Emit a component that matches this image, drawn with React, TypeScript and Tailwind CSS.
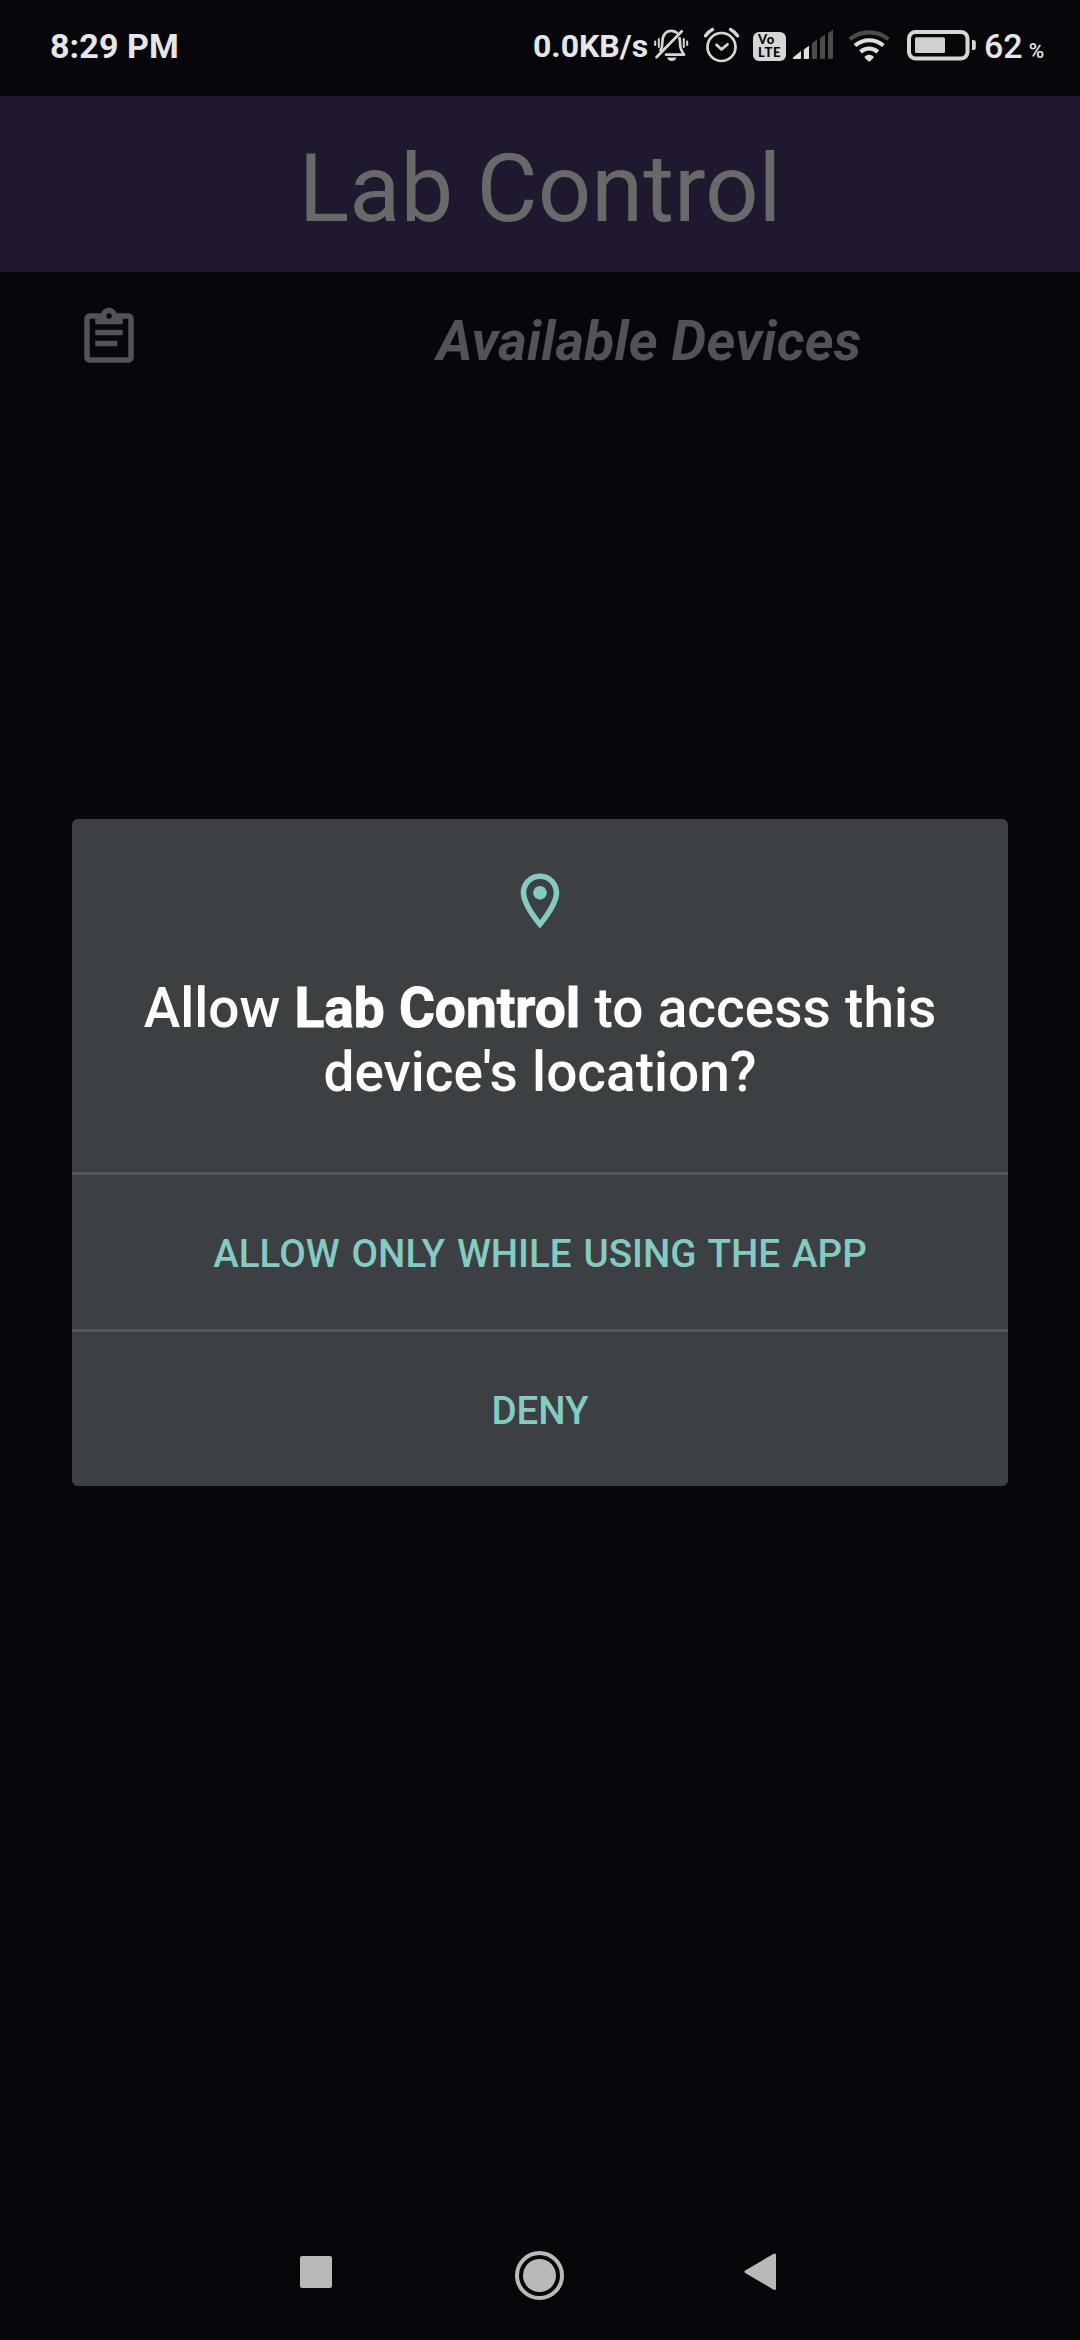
import type { ReactNode } from 'react';

function StatusIcon({ box, className, children }: { box: string; className: string; children: ReactNode }) {
  return (
    <svg viewBox={box} className={`h-10 shrink-0 ${className}`} fill="none" aria-hidden="true">
      {children}
    </svg>
  );
}

function BellOff() {
  return (
    <StatusIcon box="0 0 38 40" className="w-[38px] text-[#d6d6d6]">
      <g stroke="currentColor" strokeWidth="2.7" strokeLinecap="round">
        <path d="M8.500 24.500c1.600-2.500 1.900-5 1.900-8.500 0-7 3.600-11.200 8.800-11.200 2.200 0 4.200.7 5.600 2" />
        <path d="M27.500 12.200c.6 2 .5 4 .6 6.300.1 4 1.300 6.500 4 10.200H14" strokeLinejoin="round" />
        <path d="M4.500 31.300 29.800 5.200" />
      </g>
      <path d="M15 31.500h9.500c-.8 2.500-2.500 3.500-4.700 3.500s-4-1-4.800-3.500z" fill="currentColor" />
      <g stroke="currentColor" strokeWidth="2" strokeLinecap="round">
        <path d="M6.800 13v8M3.200 15.500v3.500M31.800 13v8M35.200 15.500v3.500" />
      </g>
    </StatusIcon>
  );
}

function Alarm() {
  return (
    <StatusIcon box="0 0 38 40" className="w-[38px] text-[#d6d6d6]">
      <circle cx="19.500" cy="21" r="14" stroke="currentColor" strokeWidth="2.700" />
      <path d="m14.500 18.800 5 4.600 6-5" stroke="currentColor" strokeWidth="2.700" strokeLinecap="round" strokeLinejoin="round" />
      <path d="M3.500 9.800c1.800-2.600 4-4.600 7-6.200M35.500 9.800c-1.800-2.600-4-4.600-7-6.200" stroke="currentColor" strokeWidth="3.400" strokeLinecap="round" />
    </StatusIcon>
  );
}

function Signal() {
  return (
    <StatusIcon box="0 0 42 40" className="w-[42px]">
      <path d="M1 31.500 9 25v7a1 1 0 0 1-1 1H2c-1 0-1.500-.8-1-1.500z" fill="#dedede" />
      <path d="M11.800 23.500 17 19.700V32a1 1 0 0 1-1 1h-3.200a1 1 0 0 1-1-1z" fill="#dedede" />
      <path d="M20 17.300 25 13.500V32a1 1 0 0 1-1 1h-3a1 1 0 0 1-1-1z" fill="#4b4b4d" />
      <path d="M28 12.200 33 8.500V32a1 1 0 0 1-1 1h-3a1 1 0 0 1-1-1z" fill="#4b4b4d" />
      <path d="M36 7.200 41 3.800V32a1 1 0 0 1-1 1h-3a1 1 0 0 1-1-1z" fill="#4b4b4d" />
    </StatusIcon>
  );
}

function Wifi() {
  return (
    <StatusIcon box="0 0 44 40" className="w-11">
      <g strokeWidth="4.200">
        <path d="M2.800 13.200c11.400-9.200 27.200-9.200 38.600 0" stroke="#4b4b4d" />
        <path d="M8 19.500c8.500-7 20-7 28.400 0" stroke="#dedede" />
        <path d="M13.500 25.800c5.300-4.300 12-4.300 17.300 0" stroke="#dedede" />
      </g>
      <path d="M18 30.300c2.400-2.100 5.900-2.100 8.300 0 .6.6.5 1.300 0 1.800L23 35.200c-.5.500-1.200.5-1.700 0L18 32.100c-.5-.5-.6-1.200 0-1.800z" fill="#dedede" />
    </StatusIcon>
  );
}

function Battery() {
  return (
    <StatusIcon box="0 0 70 40" className="w-[70px]">
      <rect x="3" y="6" width="58.500" height="26.500" rx="6.500" stroke="#d6d6d6" strokeWidth="4" />
      <rect x="9" y="11.300" width="30" height="15.800" rx="1.500" fill="#d0d0d0" />
      <path d="M66 14h1.500c1.500 0 2.300 1 2.300 2.300v5.400c0 1.300-.8 2.300-2.300 2.300H66z" fill="#d6d6d6" />
    </StatusIcon>
  );
}

function StatusBar() {
  return (
    <header className="flex h-24 items-center pb-1 pl-[50px] text-[#e6e6e6]">
      <span className="text-[34px] leading-10 font-bold tracking-[0.1px]">8:29 PM</span>
      <div className="ml-auto flex w-[547px] shrink-0 items-center">
        <span className="w-[119px] text-[32px] leading-10 font-bold">0.0KB/s</span>
        <BellOff />
        <span className="w-3" />
        <Alarm />
        <span className="w-[13px]" />
        <div className="flex h-[29px] w-[33px] flex-col items-start justify-center rounded-[6px] bg-[#d6d6d6] pl-[5px] font-['Lato'] text-[13px] leading-[13px] font-black tracking-[0.8px] text-[#08080a]">
          <span>Vo</span>
          <span>LTE</span>
        </div>
        <span className="w-1.5" />
        <Signal />
        <span className="w-[13px]" />
        <Wifi />
        <span className="w-[15px]" />
        <Battery />
        <span className="ml-2 text-[34px] leading-10 font-medium">62</span>
        <span className="mt-2.5 ml-1.5 text-[21px] leading-6 font-medium">%</span>
      </div>
    </header>
  );
}

function Clipboard() {
  return (
    <svg viewBox="0 0 24 24" className="size-[66px] text-[#535256]" fill="currentColor" aria-hidden="true">
      <path
        fillRule="evenodd"
        d="M19 3h-4.180C14.400 1.840 13.300 1 12 1s-2.400.84-2.820 2H5c-1.100 0-2 .9-2 2v14c0 1.100.9 2 2 2h14c1.100 0 2-.9 2-2V5c0-1.100-.9-2-2-2zm-7 0a1 1 0 1 1 0 2 1 1 0 0 1 0-2zm7 16H5V5h2v2h10V5h2z"
      />
      <path d="M7 9h10v2H7zM7 13h8v2H7z" />
    </svg>
  );
}

function PermissionDialog() {
  return (
    <div className="absolute inset-0 flex items-start justify-center pt-[819px]">
      <section role="dialog" className="flex w-[936px] flex-col rounded-[6px] bg-[#3d4042] text-center">
        <div className="flex h-[353px] flex-col items-center pt-[49px]">
          <svg viewBox="0 0 24 24" className="size-[66px] text-[#83cbc3]" fill="currentColor" aria-hidden="true">
            <path d="M12 2C8.130 2 5 5.130 5 9c0 5.250 7 13 7 13s7-7.750 7-13c0-3.870-3.130-7-7-7zM7 9c0-2.760 2.240-5 5-5s5 2.240 5 5c0 2.880-2.880 7.190-5 9.880C9.920 16.210 7 11.850 7 9z" />
            <circle cx="12" cy="9" r="2.500" />
          </svg>
          <h2 className="mt-[42px] text-[55px] leading-[64px] font-medium [word-spacing:0.6px] text-[#fcfdfd]">
            Allow <b className="font-bold [-webkit-text-stroke:1px_#fcfdfd]">Lab Control</b> to access this
            <br />
            device's location?
          </h2>
        </div>
        <button className="h-[157px] border-t-[3px] border-[#53575a] pt-1 text-[38.5px] leading-none font-medium [word-spacing:2.4px] text-[#83cbc3]">
          ALLOW ONLY WHILE USING THE APP
        </button>
        <button className="h-[157px] border-t-[3px] border-[#53575a] pt-1 text-[38.5px] leading-none font-medium text-[#83cbc3]">
          DENY
        </button>
      </section>
    </div>
  );
}

function NavigationBar() {
  return (
    <nav className="mt-auto flex h-[130px] items-start pl-[300px]">
      <div className="mt-[46px] size-8 rounded-[2px] bg-[#b9b9b9]" />
      <div className="mt-[41px] ml-[183px] flex size-[49px] items-center justify-center rounded-full border-4 border-[#b9b9b9]">
        <div className="size-[33px] rounded-full bg-[#b9b9b9]" />
      </div>
      <svg viewBox="0 0 32 38" className="mt-[43px] ml-[180px] h-[38px] w-8" aria-hidden="true">
        <path d="M2 18.700 30.500 2v33.400z" fill="#b9b9b9" stroke="#b9b9b9" strokeWidth="3" strokeLinejoin="round" />
      </svg>
    </nav>
  );
}

export default function App() {
  return (
    <div className="relative flex h-[2340px] w-[1080px] flex-col overflow-hidden bg-[#07060b] font-['Roboto',sans-serif]">
      <StatusBar />
      <div className="flex h-44 items-center justify-center bg-[#20182e] pt-2.5">
        <h1 className="text-[94px] leading-none font-normal text-[#696969]">Lab Control</h1>
      </div>
      <div className="flex h-[132px] items-center">
        <div className="flex w-[216px] justify-center pl-0.5">
          <Clipboard />
        </div>
        <h3 className="mt-1.5 flex-1 pl-0.5 text-center text-[55px] leading-none font-bold tracking-[0.2px] text-[#535256] italic">
          Available Devices
        </h3>
      </div>
      <NavigationBar />
      <PermissionDialog />
    </div>
  );
}
